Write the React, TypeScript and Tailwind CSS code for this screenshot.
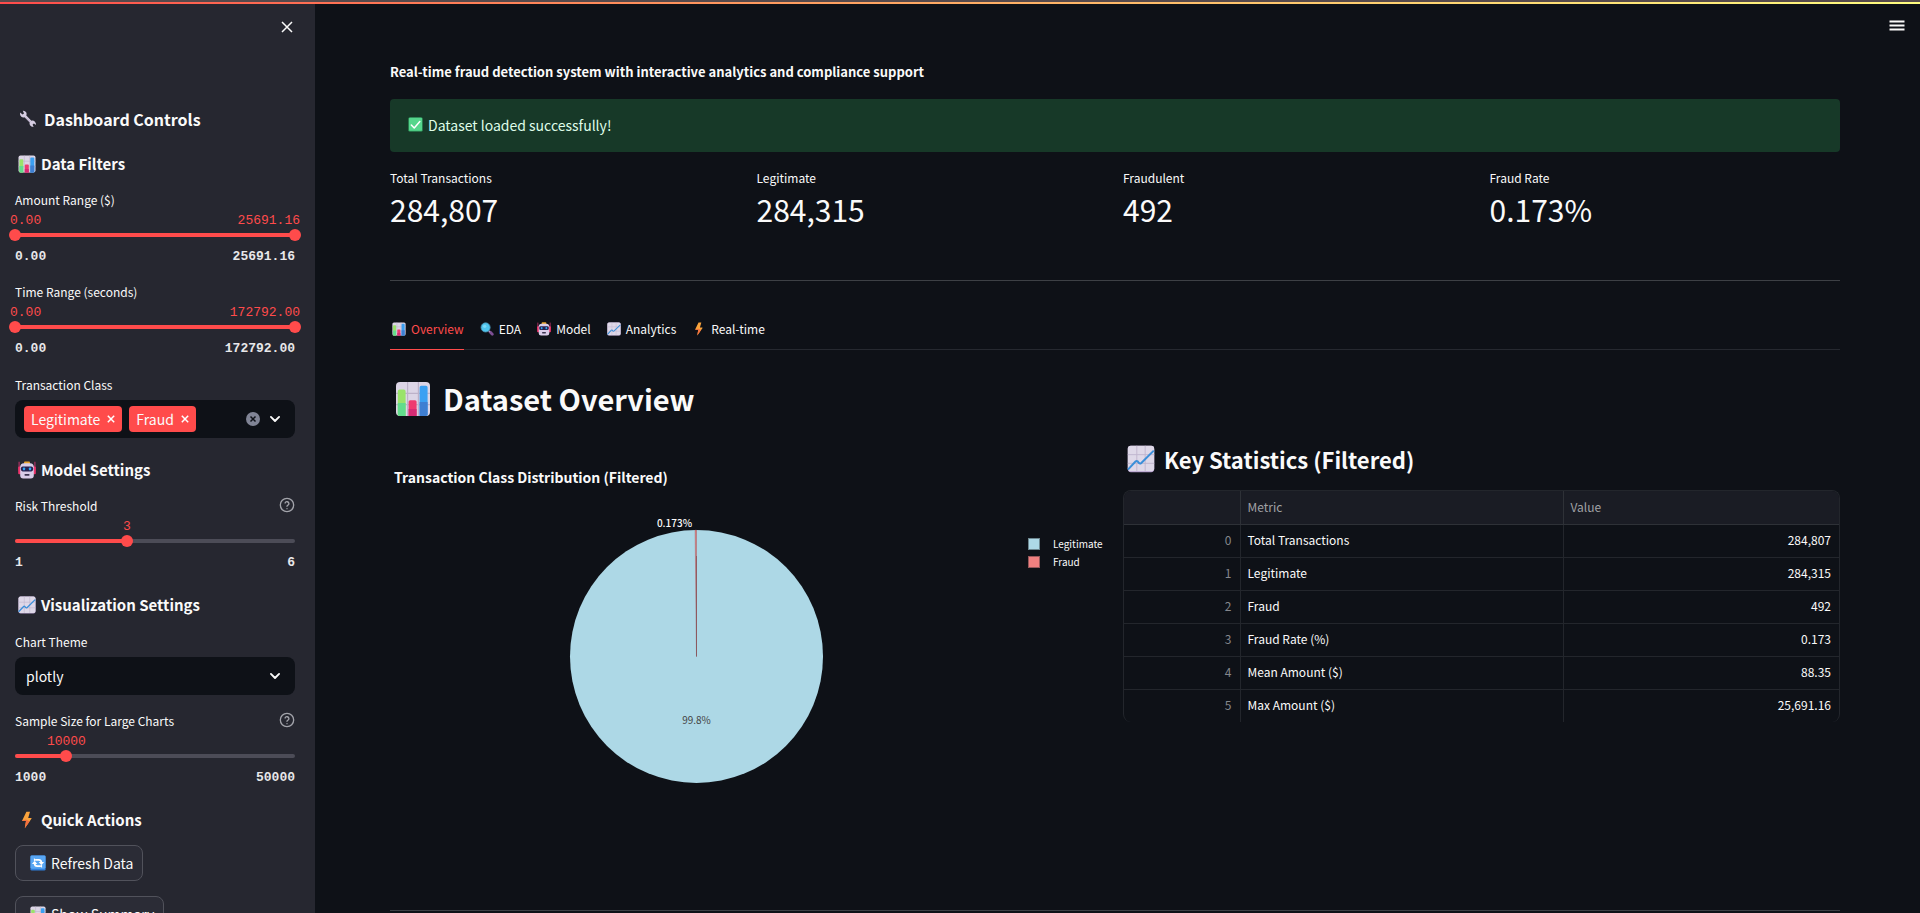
import { useId, useState } from "react";
import type { ReactNode } from "react";

type IconProps = { className?: string };

function BarsIcon({ className }: IconProps) {
  return (
    <svg viewBox="0 0 18 18" className={className} aria-hidden="true">
      <rect x="0.5" y="0.5" width="17" height="17" rx="2" fill="#dcd5e6" />
      <path d="M6.3 .5v17M11.7 .5v17M.5 6.2h17M.5 11.8h17" stroke="#bdb2c9" strokeWidth=".6" />
      <path d="M1.4 5.2q0-.9.900-.9h2.100q.900 0 .900.900v12.300H2.300q-.9 0-.9-.9z" fill="#9ae36a" />
      <path d="M1.400 11h3.900v6.500H2.300q-.9 0-.9-.9z" fill="#62dc8c" />
      <path d="M6.800 10.400q0-.8.800-.8h2.400q.8 0 .8.800v7.100H6.800z" fill="#ee3a70" />
      <path d="M6.800 14h4v3.500h-4z" fill="#d62b74" />
      <path d="M12.300 3.200q0-.8.800-.8h2.400q.8 0 .8.800v13.400q0 .9-.9.900h-3.100z" fill="#3ba0f2" />
      <path d="M12.300 10.500h4v6.100q0 .9-.9.900h-3.100z" fill="#3f7fd2" />
    </svg>
  );
}

function TrendIcon({ className }: IconProps) {
  return (
    <svg viewBox="0 0 18 18" className={className} aria-hidden="true">
      <rect x="0.5" y="0.5" width="17" height="17" rx="2" fill="#b59fce" />
      <rect x="0.5" y="0.5" width="17" height="16.4" rx="2" fill="#ded8e8" />
      <path d="M6.3 .5v16.4M11.7 .5v16.4M.5 6.2h17M.5 11.8h17" stroke="#c0b5cd" strokeWidth=".6" />
      <path d="M.6 15.800L5.600 10.500Q6.200 10 6.800 10.500L7.700 11.600Q8.400 12.200 9.200 11.500L17.200 3.600" fill="none" stroke="#3a8fd9" strokeWidth="1.300" />
    </svg>
  );
}

function RobotIcon({ className }: IconProps) {
  return (
    <svg viewBox="0 0 18 18" className={className} aria-hidden="true">
      <path d="M1.100 .8v9M16.900 .8v9" stroke="#b8336a" strokeWidth="1.100" />
      <rect x=".2" y="5.600" width="3" height="7.600" rx="1" fill="#f0346c" />
      <rect x="14.800" y="5.600" width="3" height="7.600" rx="1" fill="#f0346c" />
      <rect x="6" y=".4" width="6" height="3" rx="1" fill="#e8a52c" />
      <path d="M2.200 6Q2.200 2.200 6 2.200h6q3.800 0 3.800 3.800v8.400q0 3-3 3H5.200q-3 0-3-3z" fill="#d9cde8" />
      <rect x="2.900" y="5.400" width="12.200" height="5" rx="1.800" fill="#27224f" />
      <rect x="4.900" y="6.400" width="2.200" height="2.900" rx=".9" fill="#2ea6f2" />
      <rect x="10.900" y="6.400" width="2.200" height="2.900" rx=".9" fill="#2ea6f2" />
      <rect x="6.500" y="13" width="5" height="1.700" rx=".6" fill="#3b3450" />
    </svg>
  );
}

function WrenchIcon({ className }: IconProps) {
  return (
    <svg viewBox="0 0 18 18" className={className} aria-hidden="true">
      <path
        d="M1 2.6L3.6 4.6 5 3.4 3.8.8Q6.200 .6 7.300 2.600 8 4.200 7.300 5.600L12.400 10.800Q14.200 10.200 15.700 11.400 17.400 12.900 16.900 15L14.900 13.400 13.600 14.400 14.600 17Q12 17 11 15.200 10.200 13.700 10.700 12.400L5.500 7.300Q3.800 7.900 2.300 6.700 .6 5.200 1 2.600Z"
        fill="#d6cde2"
      />
      <path d="M7 7.600L11.400 12" stroke="#a99bb9" strokeWidth=".7" />
    </svg>
  );
}

function BoltIcon({ className }: IconProps) {
  return (
    <svg viewBox="0 0 18 18" className={className} aria-hidden="true">
      <path d="M8.400 .8L4.200 9.400Q4 10 4.600 10H8L6.800 17.200 13.600 7.600Q13.900 7 13.200 7H10.200L12 .8Z" fill="#f9a33c" />
      <path d="M4.200 9.400Q4 10 4.600 10H8L6.800 17.200 11.600 10.400 8 8.600Z" fill="#f4703f" />
    </svg>
  );
}

function LensIcon({ className }: IconProps) {
  return (
    <svg viewBox="0 0 18 18" className={className} aria-hidden="true">
      <path d="M13 13l2.800 2.800" stroke="#7d4f93" strokeWidth="3.600" strokeLinecap="round" />
      <path d="M10.500 10.500l2 2" stroke="#b9a9c9" strokeWidth="1.600" />
      <circle cx="7.200" cy="7" r="5.900" fill="#4fc5ee" stroke="#4a8fae" strokeWidth="1" />
      <circle cx="6" cy="5.600" r="2.200" fill="#8fe3fb" opacity=".7" />
    </svg>
  );
}

function RefreshIcon({ className }: IconProps) {
  return (
    <svg viewBox="0 0 18 18" className={className} aria-hidden="true">
      <rect x=".5" y=".5" width="17" height="17" rx="1.600" fill="#2f7fdc" />
      <rect x=".5" y=".5" width="17" height="15" rx="1.600" fill="#58a6f3" />
      <path d="M6.400 5.400h3.400q3 0 3 3M11.600 12.600H8.200q-3 0-3-3" fill="none" stroke="#fff" strokeWidth="1.900" />
      <path d="M9.800 8h6l-3 3.400zM8.200 10h-6l3-3.400zM4.400 3.600v4l3-2.200zM13.600 14.400v-4l-3 2.200z" fill="#fff" />
    </svg>
  );
}

function CheckIcon({ className }: IconProps) {
  return (
    <svg viewBox="0 0 18 18" className={className} aria-hidden="true">
      <rect x=".5" y=".5" width="17" height="17" rx="1.600" fill="#36a968" />
      <rect x="1.200" y="1" width="15.600" height="15.600" rx="1.200" fill="#55d68c" />
      <path d="M4 9.600l3.500 3.600L14.200 5.400" fill="none" stroke="#fff" strokeWidth="1.800" strokeLinecap="round" strokeLinejoin="round" />
    </svg>
  );
}

function Chevron({ className }: IconProps) {
  return (
    <svg viewBox="0 0 12 12" className={className} aria-hidden="true">
      <path d="M2.500 4.200L6 7.700l3.500-3.500" fill="none" stroke="#fafafa" strokeWidth="1.600" strokeLinecap="round" strokeLinejoin="round" />
    </svg>
  );
}

function HelpButton({ topic }: { topic: string }) {
  return (
    <button type="button" aria-label={`Help: ${topic}`} className="text-[#a3a4ab]">
      <svg viewBox="0 0 24 24" className="size-4" fill="none" stroke="currentColor" strokeWidth="2" strokeLinecap="round" strokeLinejoin="round">
        <circle cx="12" cy="12" r="10" />
        <path d="M9.100 9a3 3 0 0 1 5.800 1c0 2-2.900 2.700-2.900 4M12 17.500h.01" />
      </svg>
    </button>
  );
}

const thumb =
  "pointer-events-none absolute inset-y-0 -left-[6px] w-[calc(100%+12px)] cursor-pointer appearance-none bg-transparent [&::-webkit-slider-thumb]:pointer-events-auto [&::-webkit-slider-thumb]:size-3 [&::-webkit-slider-thumb]:appearance-none [&::-webkit-slider-thumb]:rounded-full [&::-webkit-slider-thumb]:bg-[#ff4b4b]";

type SliderProps = {
  label: string;
  min: number;
  max: number;
  initial: number[];
  decimals?: number;
  help?: boolean;
};

function Slider({ label, min, max, initial, decimals = 0, help }: SliderProps) {
  const id = useId();
  const [values, setValues] = useState(initial);
  const ranged = values.length === 2;
  const percent = (v: number) => ((v - min) / (max - min)) * 100;
  const start = ranged ? percent(values[0]) : 0;
  const end = percent(values[values.length - 1]);
  const update = (index: number, value: number) =>
    setValues(values.map((v, i) => (i === index ? value : v)));

  return (
    <div>
      <div className="flex h-5 items-start justify-between">
        <label htmlFor={`${id}-0`} className="text-xs leading-[18px]">{label}</label>
        {help && <HelpButton topic={label} />}
      </div>
      <div className="relative h-4 font-['Liberation_Mono',monospace] text-[13px] leading-5 text-[#ff4b4b]">
        {ranged ? (
          <div className="-mx-[5px] flex justify-between">
            <output>{values[0].toFixed(decimals)}</output>
            <output>{values[1].toFixed(decimals)}</output>
          </div>
        ) : (
          <output className="absolute -translate-x-1/2" style={{ left: `${end}%` }}>{values[0].toFixed(decimals)}</output>
        )}
      </div>
      <div className="relative flex h-4 items-center">
        <div className="h-1 w-full overflow-hidden rounded-full bg-[#4c4c57]">
          <div className="h-full bg-[#ff4b4b]" style={{ marginLeft: `${start}%`, width: `${end - start}%` }} />
        </div>
        {values.map((v, i) => (
          <input
            key={i}
            id={`${id}-${i}`}
            aria-label={ranged ? `${label} ${i === 0 ? "minimum" : "maximum"}` : undefined}
            type="range"
            min={min}
            max={max}
            step={decimals ? 0.01 : 1}
            value={v}
            onChange={(e) => update(i, Number(e.target.value))}
            className={thumb}
          />
        ))}
      </div>
      <div className="flex h-[26px] justify-between font-['Liberation_Mono',monospace] text-[13px] leading-7 font-bold text-[#e8e8ea]">
        <span>{min.toFixed(decimals)}</span>
        <span>{max.toFixed(decimals)}</span>
      </div>
    </div>
  );
}

function SideHeading({ icon, children }: { icon: ReactNode; children: ReactNode }) {
  return (
    <h3 className="mt-4 mb-[13px] flex h-7 items-center gap-[5px] pl-[3px] text-[15px] font-bold">
      {icon}
      {children}
    </h3>
  );
}

function Sidebar() {
  const [classes, setClasses] = useState(["Legitimate", "Fraud"]);
  return (
    <aside className="w-[315px] shrink-0 overflow-y-auto bg-[#262730] pr-5 pb-10 pl-[15px] [scrollbar-width:none]">
      <div className="flex h-[99px] items-start justify-end pt-[19px]">
        <button type="button" aria-label="Close sidebar">
          <svg viewBox="0 0 16 16" className="size-4" stroke="#fafafa" strokeWidth="1.500">
            <path d="M3 3l10 10M13 3L3 13" />
          </svg>
        </button>
      </div>
      <h2 className="flex h-10 items-center gap-[7px] pl-1 text-base font-bold">
        <WrenchIcon className="size-[18px]" />
        Dashboard Controls
      </h2>
      <h3 className="mt-[11px] mb-[13px] flex h-7 items-center gap-[5px] pl-[3px] text-[15px] font-bold">
        <BarsIcon className="size-[18px]" />
        Data Filters
      </h3>
      <div className="flex flex-col gap-[14px]">
        <Slider label="Amount Range ($)" min={0} max={25691.16} initial={[0, 25691.16]} decimals={2} />
        <Slider label="Time Range (seconds)" min={0} max={172792} initial={[0, 172792]} decimals={2} />
        <div>
          <label htmlFor="transaction-class" className="block text-xs leading-5">Transaction Class</label>
          <div className="mt-[5px] mb-[2px] flex h-[38px] items-center rounded-lg bg-[#0e1117] pr-[13px] pl-[9px]">
            <div className="flex shrink-0 gap-[7px]">
              {classes.map((name) => (
                <span key={name} className="flex h-[26px] items-center gap-[7px] rounded bg-[#ff4b4b] px-[7px] text-sm">
                  {name}
                  <button type="button" aria-label={`Remove ${name}`} onClick={() => setClasses(classes.filter((c) => c !== name))}>
                    <svg viewBox="0 0 8 8" className="size-2" stroke="#fff" strokeWidth="1.500">
                      <path d="M.8 .8l6.400 6.400M7.200 .8L.8 7.200" />
                    </svg>
                  </button>
                </span>
              ))}
            </div>
            <input id="transaction-class" type="text" className="w-0 min-w-0 flex-1 bg-transparent text-sm outline-none" />
            <button type="button" aria-label="Clear all" className="mr-2" onClick={() => setClasses([])}>
              <svg viewBox="0 0 14 14" className="size-[14px]">
                <circle cx="7" cy="7" r="7" fill="#808495" />
                <path d="M4.500 4.500l5 5M9.500 4.500l-5 5" stroke="#0e1117" strokeWidth="1.500" />
              </svg>
            </button>
            <button type="button" aria-label="Open list"><Chevron className="size-[14px]" /></button>
          </div>
        </div>
      </div>
      <SideHeading icon={<RobotIcon className="size-[18px]" />}>Model Settings</SideHeading>
      <Slider label="Risk Threshold" min={1} max={6} initial={[3]} help />
      <SideHeading icon={<TrendIcon className="size-[18px]" />}>Visualization Settings</SideHeading>
      <label htmlFor="chart-theme" className="block text-xs leading-5">Chart Theme</label>
      <div className="relative mt-[5px] mb-[17px]">
        <select id="chart-theme" className="block h-[38px] w-full appearance-none rounded-lg bg-[#0e1117] px-[11px] text-sm">
          <option>plotly</option>
          <option>plotly_dark</option>
          <option>ggplot2</option>
        </select>
        <Chevron className="pointer-events-none absolute top-3 right-[13px] size-[14px]" />
      </div>
      <Slider label="Sample Size for Large Charts" min={1000} max={50000} initial={[10000]} help />
      <SideHeading icon={<BoltIcon className="size-[18px]" />}>Quick Actions</SideHeading>
      <div className="-mt-[2px] flex flex-col items-start gap-[15px]">
        <button type="button" className="flex h-9 items-center gap-[5px] rounded-lg border border-[#51525b] bg-[#2b2c36] pr-[9px] pl-[14px] text-sm">
          <RefreshIcon className="size-4" />
          Refresh Data
        </button>
        <button type="button" className="flex h-9 items-center gap-[5px] rounded-lg border border-[#51525b] bg-[#2b2c36] pr-[9px] pl-[14px] text-sm">
          <BarsIcon className="size-4" />
          Show Summary
        </button>
      </div>
    </aside>
  );
}

const metrics = [
  ["Total Transactions", "284,807"],
  ["Legitimate", "284,315"],
  ["Fraudulent", "492"],
  ["Fraud Rate", "0.173%"],
];

const tabs = [
  { name: "Overview", Icon: BarsIcon },
  { name: "EDA", Icon: LensIcon },
  { name: "Model", Icon: RobotIcon },
  { name: "Analytics", Icon: TrendIcon },
  { name: "Real-time", Icon: BoltIcon },
];

const stats = [
  ["Total Transactions", "284,807"],
  ["Legitimate", "284,315"],
  ["Fraud", "492"],
  ["Fraud Rate (%)", "0.173"],
  ["Mean Amount ($)", "88.35"],
  ["Max Amount ($)", "25,691.16"],
];

function PieChart() {
  return (
    <figure className="pt-[25px]">
      <figcaption className="pl-1 text-sm leading-5 font-bold">Transaction Class Distribution (Filtered)</figcaption>
      <div className="mt-[23px] flex items-start">
        <svg viewBox="0 0 300 300" className="h-[300px] min-w-0 flex-1" role="img" aria-label="Pie chart of transaction classes">
          <circle cx="150" cy="146.500" r="126.500" fill="#add8e6" />
          <path d="M150 146.500V20a126.500 126.500 0 0 0-1.370 .01Z" fill="#f08080" stroke="#8b4a50" strokeWidth=".4" />
          <path d="M150 146.500V46" stroke="#844a50" strokeWidth=".7" />
          <text x="128" y="17" fontSize="10" textAnchor="middle" fill="#fafafa" className="font-medium">0.173%</text>
          <text x="150" y="214" fontSize="10" textAnchor="middle" fill="#444">99.8%</text>
        </svg>
        <ul className="mt-[25px] w-[104px] pl-[25px] text-[10px] leading-[18px]">
          <li className="flex items-center gap-[13px]">
            <span className="size-3 border border-[#6d8790] bg-[#add8e6]" />
            Legitimate
          </li>
          <li className="flex items-center gap-[13px]">
            <span className="size-3 border border-[#96575a] bg-[#f08080]" />
            Fraud
          </li>
        </ul>
      </div>
    </figure>
  );
}

export default function App() {
  const [active, setActive] = useState("Overview");
  return (
    <div className="relative flex h-screen bg-[#0e1117] font-['Noto_Sans_CJK_SC',sans-serif] text-[#fafafa]">
      <Sidebar />
      <main className="min-w-0 flex-1 overflow-y-auto pt-[60px] pr-20 pb-16 pl-[75px] [scrollbar-width:none]">
        <p className="text-[13px] leading-6 font-bold">
          Real-time fraud detection system with interactive analytics and compliance support
        </p>
        <div role="status" className="mt-[15px] flex h-[53px] items-center gap-[5px] rounded bg-[#173928] px-[18px] pb-[2px] text-sm text-[#dffde9]">
          <CheckIcon className="size-[15px]" />
          Dataset loaded successfully!
        </div>
        <dl className="mt-4 grid grid-cols-4 gap-4">
          {metrics.map(([label, value]) => (
            <div key={label}>
              <dt className="text-xs leading-5">{label}</dt>
              <dd className="text-3xl leading-[42px]">{value}</dd>
            </div>
          ))}
        </dl>
        <hr className="mt-[50px] border-[#3d4045]" />
        <div role="tablist" className="mt-[31px] flex h-[38px] gap-[14px] border-b border-[#262930]">
          {tabs.map(({ name, Icon }) => (
            <button
              key={name}
              type="button"
              role="tab"
              aria-selected={active === name}
              onClick={() => setActive(name)}
              className={
                active === name
                  ? "-mb-px flex items-center gap-[5px] border-b border-[#ff4b4b] pb-[3px] pl-[2px] text-xs text-[#ff4b4b]"
                  : "-mb-px flex items-center gap-[5px] border-b border-transparent pb-[3px] pl-[2px] text-xs"
              }
            >
              <Icon className="size-[14px]" />
              {name}
            </button>
          ))}
        </div>
        <h1 className="mt-[26px] flex h-[46px] items-center gap-3 pl-[5px] text-[29px] font-bold">
          <BarsIcon className="size-9" />
          Dataset Overview
        </h1>
        <div className="mt-5 grid min-h-[468px] grid-cols-2 gap-4">
          <PieChart />
          <section>
            <h2 className="flex h-[34px] items-center gap-[9px] pl-1 text-[22px] font-bold">
              <TrendIcon className="size-7" />
              Key Statistics (Filtered)
            </h2>
            <div className="mt-[14px] overflow-hidden rounded-lg border border-b-0 border-[#23262c]">
              <table className="w-full table-fixed border-collapse text-xs">
                <thead>
                  <tr className="h-[33px] border-b border-[#2e3137] bg-[#1a1c24] text-left text-[#a0a1a5]">
                    <th scope="col" aria-label="Index" className="w-[116px] border-r border-[#2e3137]" />
                    <th scope="col" className="w-[323px] border-r border-[#2e3137] px-[7px] font-normal">Metric</th>
                    <th scope="col" className="px-[7px] font-normal">Value</th>
                  </tr>
                </thead>
                <tbody>
                  {stats.map(([metric, value], i) => (
                    <tr key={metric} className="h-[33px] border-b border-[#23262c] last:border-b-0">
                      <td className="border-r border-[#23262c] px-2 pb-[2px] text-right text-[#85878c]">{i}</td>
                      <td className="border-r border-[#23262c] px-[7px] pb-[2px]">{metric}</td>
                      <td className="px-2 pb-[2px] text-right">{value}</td>
                    </tr>
                  ))}
                </tbody>
              </table>
            </div>
          </section>
        </div>
        <hr className="border-[#3d4045]" />
      </main>
      <button type="button" aria-label="Main menu" className="absolute top-[18px] right-[15px]">
        <svg viewBox="0 0 16 16" className="size-4" stroke="#fafafa" strokeWidth="1.800">
          <path d="M.5 3.500h15M.5 7.500h15M.5 11.500h15" />
        </svg>
      </button>
      <div className="absolute inset-x-0 top-0 h-1 border-t-2 border-[#564a4c] bg-linear-to-r from-[#ff4b4b] to-[#fffd80]" />
    </div>
  );
}
